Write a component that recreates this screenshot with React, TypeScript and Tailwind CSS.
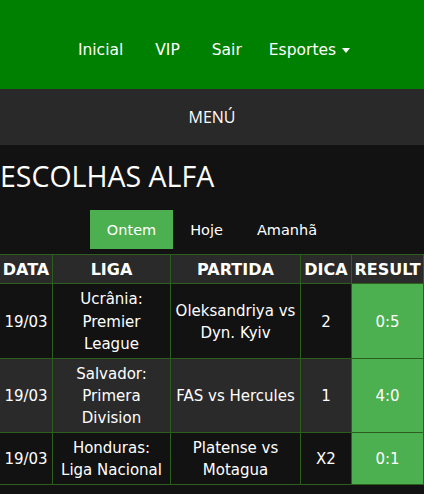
import React from 'react';

type Pick = {
  date: string;
  league: string[];
  match: string[];
  tip: string;
  result: string;
};

const picks: Pick[] = [
  { date: '19/03', league: ['Ucrânia:', 'Premier', 'League'], match: ['Oleksandriya vs', 'Dyn. Kyiv'], tip: '2', result: '0:5' },
  { date: '19/03', league: ['Salvador:', 'Primera', 'Division'], match: ['FAS vs Hercules'], tip: '1', result: '4:0' },
  { date: '19/03', league: ['Honduras:', 'Liga Nacional'], match: ['Platense vs', 'Motagua'], tip: 'X2', result: '0:1' },
];

const navLinks = ['Inicial', 'VIP', 'Sair'];

const App: React.FC = () => {
  return (
    <div className="min-h-[494px] bg-[#121212] text-white font-['DejaVu_Sans',Verdana,sans-serif]">
      {/* Top nav */}
      <header className="flex h-[89px] justify-center bg-[#008000] pt-[42px] text-[15.5px] leading-[17px]">
        <nav className="ml-[4px] flex items-start">
          {navLinks.map((link) => (
            <a key={link} href="#" className="px-4">
              {link}
            </a>
          ))}
          <a href="#" className="flex items-start pl-[11px] pr-4">
            Esportes
            <svg width="8" height="5" viewBox="0 0 8 5" className="ml-[6px] mt-[6px]">
              <polygon points="0,0 8,0 4,5" fill="#ffffff" />
            </svg>
          </a>
        </nav>
      </header>

      {/* Menu bar */}
      <div className="flex h-[56px] items-center justify-center bg-[#292929] font-['Open_Sans',sans-serif] text-[16px]">
        MENÚ
      </div>

      {/* Picks */}
      <main>
        <h1 className="mt-[12px] font-['Open_Sans',sans-serif] text-[28.5px] leading-[39px]">
          ESCOLHAS ALFA
        </h1>

        <div className="mt-[14px] flex justify-center text-[14.5px] leading-[17px]">
          <button className="bg-[#4caf50] px-[17px] pt-[12px] pb-[10px]">Ontem</button>
          <button className="px-[17px] pt-[12px] pb-[10px]">Hoje</button>
          <button className="px-[17px] pt-[12px] pb-[10px]">Amanhã</button>
        </div>

        <table className="mt-[5px] -ml-px w-[424px] table-fixed border-collapse text-center text-[15px] leading-[22.4px]">
          <colgroup>
            <col className="w-[53px]" />
            <col className="w-[118px]" />
            <col className="w-[130px]" />
            <col className="w-[51px]" />
            <col className="w-[72px]" />
          </colgroup>
          <thead>
            <tr className="bg-[#2a2a2a] text-[16px] font-bold">
              {['DATA', 'LIGA', 'PARTIDA', 'DICA', 'RESULT'].map((h) => (
                <th key={h} className="border border-[#2c5e1e] px-0 pt-[4px] pb-[2px] whitespace-nowrap">
                  {h}
                </th>
              ))}
            </tr>
          </thead>
          <tbody>
            {picks.map((p, i) => (
              <tr key={i} className={i % 2 === 1 ? 'bg-[#2a2a2a]' : 'bg-[#121212]'}>
                <td className="border border-[#2c5e1e] pt-[4px] pb-[2px]">{p.date}</td>
                <td className="border border-[#2c5e1e] pt-[4px] pb-[2px]">
                  {p.league.map((l) => (
                    <div key={l}>{l}</div>
                  ))}
                </td>
                <td className="border border-[#2c5e1e] pt-[4px] pb-[2px]">
                  {p.match.map((m) => (
                    <div key={m}>{m}</div>
                  ))}
                </td>
                <td className="border border-[#2c5e1e] pt-[4px] pb-[2px]">{p.tip}</td>
                <td className="border border-[#2c5e1e] bg-[#4caf50] pt-[4px] pb-[2px]">{p.result}</td>
              </tr>
            ))}
          </tbody>
        </table>
      </main>
    </div>
  );
};

export default App;
